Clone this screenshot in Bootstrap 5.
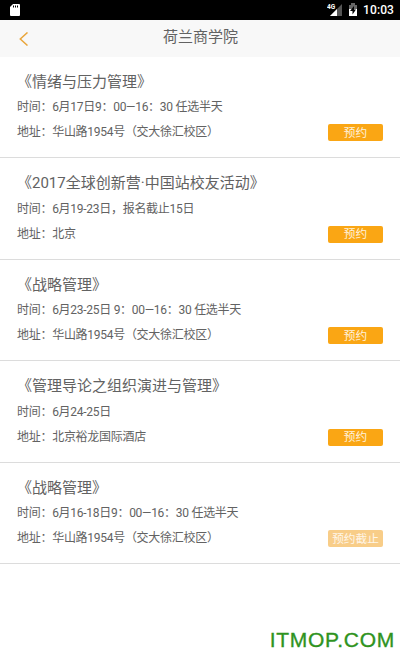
<!DOCTYPE html>
<html lang="zh-CN">
<head>
<meta charset="utf-8">
<meta name="viewport" content="width=device-width, initial-scale=1">
<title>荷兰商学院</title>
<link href="https://cdn.jsdelivr.net/npm/bootstrap@5.3.0/dist/css/bootstrap.min.css" rel="stylesheet">
<style>
body { font-family: Roboto, "Noto Sans CJK SC", sans-serif; color: #626262; background: #fff; height: 666px; overflow: hidden; }
.status-bar { height: 20px; padding: 0 6px 0 10px; }
.clock { font-size: 12px; line-height: 20px; font-weight: 500; letter-spacing: .1px; }
.title-bar { height: 37px; background: #f8f8f8; padding-left: 19px; padding-right: 20px; }
.title-bar h1 { font-size: 15px; line-height: 34px; }
.course { height: 101.5px; padding: 13px 17px 0; border-bottom: 1px solid #dcdcdc; }
.course:first-child { height: 101px; }
.course h2 { font-size: 15px; line-height: 24px; font-weight: 400; padding-bottom: 1px; }
.course + .course h2 { padding-bottom: 1.5px; }
.course p { font-size: 12px; letter-spacing: -.28px; line-height: 25px; white-space: nowrap; }
.book-btn { width: 55px; height: 17px; font-size: 11.67px; line-height: 16px; border-radius: 2px; background: #faa614; color: #fff2dc; }
.book-btn:disabled { background: #f8cd88; color: #fff6e8; opacity: 1; border: 0; }
.watermark { font: 21px/24px "Liberation Sans", Arial, sans-serif; letter-spacing: .75px; color: #2f931e; padding: 0 5px 14px 0; -webkit-text-stroke: .35px #2f931e; }
</style>
<script src="https://cdn.jsdelivr.net/npm/bootstrap@5.3.0/dist/js/bootstrap.bundle.min.js"></script>
</head>
<body class="d-flex flex-column">
<div class="status-bar bg-black text-white d-flex align-items-center justify-content-between flex-shrink-0">
  <svg width="10" height="12" viewBox="0 0 10 12"><path fill="#fff" d="M3 0h6q1 0 1 1v10q0 1-1 1H1q-1 0-1-1V3z"/><path stroke="#000" d="M3.5 1.5v2M5.5 1.5v2M7.5 1.5v2"/></svg>
  <div class="d-flex align-items-center">
    <svg width="36" height="14" viewBox="0 0 36 14">
      <text x="0" y="6" fill="#fff" font-family="Roboto, sans-serif" font-size="6.5" font-weight="700">4G</text>
      <path fill="#555" d="M15 1v12H3z"/><path fill="#fff" d="M10 6v7H3z"/>
      <path fill="#666" d="M22 2h2V0h4v2h2v5h-8z"/><path fill="#fff" d="M22 6h8v7h-8z"/><path fill="#000" d="M27 3l-4 5h2.5v3.5L29 6.500h-2z"/>
    </svg>
    <span class="clock">10:03</span>
  </div>
</div>
<header class="title-bar d-flex align-items-center justify-content-between flex-shrink-0">
  <svg width="10" height="14" viewBox="0 0 10 14"><path d="M8.500 .5 1.300 7l7.200 6.500" fill="none" stroke="#e9a63c" stroke-width="1.500"/></svg>
  <h1 class="m-0 fw-normal align-self-start">荷兰商学院</h1>
  <span class="ps-2"></span>
</header>
<main class="flex-grow-1">
  <article class="course">
    <h2 class="m-0">《情绪与压力管理》</h2>
    <p class="m-0">时间：6月17日9：00—16：30 任选半天</p>
    <div class="d-flex justify-content-between align-items-center"><p class="m-0">地址：华山路1954号（交大徐汇校区）</p><button class="btn book-btn p-0 border-0">预约</button></div>
  </article>
  <article class="course">
    <h2 class="m-0">《2017全球创新营·中国站校友活动》</h2>
    <p class="m-0">时间：6月19-23日，报名截止15日</p>
    <div class="d-flex justify-content-between align-items-center"><p class="m-0">地址：北京</p><button class="btn book-btn p-0 border-0">预约</button></div>
  </article>
  <article class="course">
    <h2 class="m-0">《战略管理》</h2>
    <p class="m-0">时间：6月23-25日 9：00—16：30 任选半天</p>
    <div class="d-flex justify-content-between align-items-center"><p class="m-0">地址：华山路1954号（交大徐汇校区）</p><button class="btn book-btn p-0 border-0">预约</button></div>
  </article>
  <article class="course">
    <h2 class="m-0">《管理导论之组织演进与管理》</h2>
    <p class="m-0">时间：6月24-25日</p>
    <div class="d-flex justify-content-between align-items-center"><p class="m-0">地址：北京裕龙国际酒店</p><button class="btn book-btn p-0 border-0">预约</button></div>
  </article>
  <article class="course">
    <h2 class="m-0">《战略管理》</h2>
    <p class="m-0">时间：6月16-18日9：00—16：30 任选半天</p>
    <div class="d-flex justify-content-between align-items-center"><p class="m-0">地址：华山路1954号（交大徐汇校区）</p><button class="btn book-btn p-0 border-0" disabled>预约截止</button></div>
  </article>
</main>
<footer class="watermark text-end">ITMOP.COM</footer>
</body>
</html>
